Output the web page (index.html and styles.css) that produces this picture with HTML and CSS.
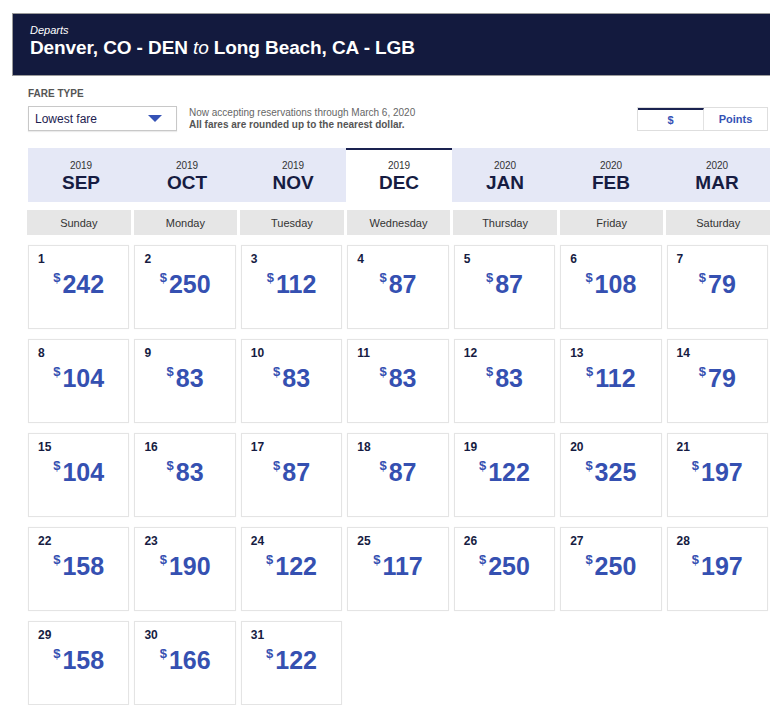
FILE: index.html
```html
<!DOCTYPE html>
<html>
<head>
<meta charset="utf-8">
<link rel="stylesheet" href="styles.css">
</head>
<body>
<div class="header">
  <div class="departs">Departs</div>
  <div class="route">Denver, CO - DEN <span class="to">to</span> Long Beach, CA - LGB</div>
</div>
<div class="controls">
  <div class="fare">
    <div class="fare-label">FARE TYPE</div>
    <div class="fare-row">
      <div class="select">
        <span>Lowest fare</span>
        <svg class="caret" width="14" height="8" viewBox="0 0 14 8"><path d="M0 0 L14 0 L7 7 Z" fill="#3552b5"/></svg>
      </div>
      <div class="note">
        <div>Now accepting reservations through March 6, 2020</div>
        <div class="note-bold">All fares are rounded up to the nearest dollar.</div>
      </div>
    </div>
  </div>
  <div class="toggle">
    <div class="seg active">$</div>
    <div class="seg">Points</div>
  </div>
</div>
<div class="months">
  <div class="month"><div class="yr">2019</div><div class="mo">SEP</div></div>
  <div class="month"><div class="yr">2019</div><div class="mo">OCT</div></div>
  <div class="month"><div class="yr">2019</div><div class="mo">NOV</div></div>
  <div class="month sel"><div class="yr">2019</div><div class="mo">DEC</div></div>
  <div class="month"><div class="yr">2020</div><div class="mo">JAN</div></div>
  <div class="month"><div class="yr">2020</div><div class="mo">FEB</div></div>
  <div class="month"><div class="yr">2020</div><div class="mo">MAR</div></div>
</div>
<div class="days">
  <div class="day">Sunday</div>
  <div class="day">Monday</div>
  <div class="day">Tuesday</div>
  <div class="day">Wednesday</div>
  <div class="day">Thursday</div>
  <div class="day">Friday</div>
  <div class="day">Saturday</div>
</div>
<div class="grid">
  <div class="cell"><div class="num">1</div><div class="price"><sup>$</sup>242</div></div>
  <div class="cell"><div class="num">2</div><div class="price"><sup>$</sup>250</div></div>
  <div class="cell"><div class="num">3</div><div class="price"><sup>$</sup>112</div></div>
  <div class="cell"><div class="num">4</div><div class="price"><sup>$</sup>87</div></div>
  <div class="cell"><div class="num">5</div><div class="price"><sup>$</sup>87</div></div>
  <div class="cell"><div class="num">6</div><div class="price"><sup>$</sup>108</div></div>
  <div class="cell"><div class="num">7</div><div class="price"><sup>$</sup>79</div></div>
  <div class="cell"><div class="num">8</div><div class="price"><sup>$</sup>104</div></div>
  <div class="cell"><div class="num">9</div><div class="price"><sup>$</sup>83</div></div>
  <div class="cell"><div class="num">10</div><div class="price"><sup>$</sup>83</div></div>
  <div class="cell"><div class="num">11</div><div class="price"><sup>$</sup>83</div></div>
  <div class="cell"><div class="num">12</div><div class="price"><sup>$</sup>83</div></div>
  <div class="cell"><div class="num">13</div><div class="price"><sup>$</sup>112</div></div>
  <div class="cell"><div class="num">14</div><div class="price"><sup>$</sup>79</div></div>
  <div class="cell"><div class="num">15</div><div class="price"><sup>$</sup>104</div></div>
  <div class="cell"><div class="num">16</div><div class="price"><sup>$</sup>83</div></div>
  <div class="cell"><div class="num">17</div><div class="price"><sup>$</sup>87</div></div>
  <div class="cell"><div class="num">18</div><div class="price"><sup>$</sup>87</div></div>
  <div class="cell"><div class="num">19</div><div class="price"><sup>$</sup>122</div></div>
  <div class="cell"><div class="num">20</div><div class="price"><sup>$</sup>325</div></div>
  <div class="cell"><div class="num">21</div><div class="price"><sup>$</sup>197</div></div>
  <div class="cell"><div class="num">22</div><div class="price"><sup>$</sup>158</div></div>
  <div class="cell"><div class="num">23</div><div class="price"><sup>$</sup>190</div></div>
  <div class="cell"><div class="num">24</div><div class="price"><sup>$</sup>122</div></div>
  <div class="cell"><div class="num">25</div><div class="price"><sup>$</sup>117</div></div>
  <div class="cell"><div class="num">26</div><div class="price"><sup>$</sup>250</div></div>
  <div class="cell"><div class="num">27</div><div class="price"><sup>$</sup>250</div></div>
  <div class="cell"><div class="num">28</div><div class="price"><sup>$</sup>197</div></div>
  <div class="cell"><div class="num">29</div><div class="price"><sup>$</sup>158</div></div>
  <div class="cell"><div class="num">30</div><div class="price"><sup>$</sup>166</div></div>
  <div class="cell"><div class="num">31</div><div class="price"><sup>$</sup>122</div></div>
</div>
</body>
</html>
```
FILE: styles.css
```css
* { box-sizing: border-box; }
html, body { margin: 0; padding: 0; background: #fff; }
body {
  font-family: "Liberation Sans", Arial, sans-serif;
  width: 770px;
  overflow: hidden;
}
.header {
  margin: 13px 0 0 12px;
  height: 63px;
  background: #131a3e;
  border: 1px solid #9b9b9b;
  border-right: none;
  padding: 10px 0 0 17px;
  color: #fff;
}
.departs { font-size: 11px; font-style: italic; line-height: 13px; }
.route { font-size: 19px; font-weight: bold; line-height: 22px; letter-spacing: -0.1px; }
.route .to { font-style: italic; font-weight: normal; }

.controls {
  display: flex;
  justify-content: space-between;
  align-items: flex-end;
  margin: 12px 2px 0 28px;
}
.fare-label { font-size: 10px; font-weight: bold; color: #555; line-height: 12px; }
.fare-row { display: flex; align-items: center; margin-top: 6px; }
.select {
  width: 149px; height: 25px;
  border: 1px solid #c8c8c8;
  box-shadow: 0 1px 1px rgba(0,0,0,0.08);
  display: flex; align-items: center; justify-content: space-between;
  padding: 0 14px 0 6px;
  font-size: 12px; color: #1d2150;
}
.caret { margin-top: 1px; }
.note { margin-left: 12px; font-size: 10px; color: #666; line-height: 12px; }
.note-bold { font-weight: bold; color: #555; }
.toggle {
  display: flex;
  height: 24px;
  border: 1px solid #dedede;
  margin-bottom: 0;
}
.seg {
  display: flex; align-items: center; justify-content: center;
  font-size: 11px; font-weight: bold; color: #3552b5;
}
.seg.active { width: 66px; border-top: 2px solid #1a2250; border-right: 1px solid #e2e2e2; }
.seg:last-child { width: 63px; }

.months {
  display: grid;
  grid-template-columns: repeat(7, 106px);
  margin: 17px 0 0 28px;
}
.month {
  height: 54px;
  background: #e5e8f6;
  text-align: center;
  padding-top: 12px;
}
.month.sel { background: #fff; border-top: 2px solid #1a2250; padding-top: 10px; }
.yr { font-size: 10px; color: #333; line-height: 12px; }
.mo { font-size: 19px; font-weight: bold; color: #161c42; line-height: 22px; }

.days {
  display: grid;
  grid-template-columns: repeat(7, 1fr);
  column-gap: 3px;
  margin: 8px 0 0 27px;
  width: 743px;
}
.day {
  height: 25px;
  background: #e6e6e6;
  font-size: 11px;
  color: #333;
  display: flex; align-items: center; justify-content: center;
}

.grid {
  display: grid;
  grid-template-columns: repeat(7, 1fr);
  column-gap: 5px;
  row-gap: 10px;
  margin: 10px 0 0 28px;
  width: 740px;
}
.cell {
  height: 84px;
  border: 1px solid #e4e4e4;
  box-shadow: 0 0 1px rgba(0,0,0,0.06);
  padding: 6px 0 0 9px;
}
.num { font-size: 12px; font-weight: bold; color: #161c42; line-height: 14px; }
.price {
  text-align: center;
  margin: 4px 9px 0 0;
  font-size: 25px;
  font-weight: bold;
  color: #3550b1;
  line-height: 28px;
}
.price sup { font-size: 13px; vertical-align: top; line-height: 14px; position: relative; top: 1px; margin-right: 2px; }
```
